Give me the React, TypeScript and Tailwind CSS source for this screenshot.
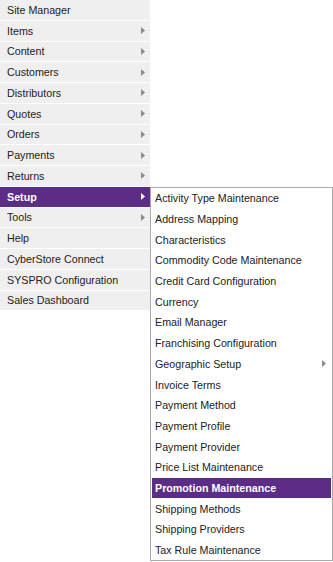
import React from 'react'

const mainItems = [
  { label: 'Site Manager', sub: false },
  { label: 'Items', sub: true },
  { label: 'Content', sub: true },
  { label: 'Customers', sub: true },
  { label: 'Distributors', sub: true },
  { label: 'Quotes', sub: true },
  { label: 'Orders', sub: true },
  { label: 'Payments', sub: true },
  { label: 'Returns', sub: true },
  { label: 'Setup', sub: true, active: true },
  { label: 'Tools', sub: true },
  { label: 'Help', sub: false },
  { label: 'CyberStore Connect', sub: false },
  { label: 'SYSPRO Configuration', sub: false },
  { label: 'Sales Dashboard', sub: false },
]

const setupItems = [
  { label: 'Activity Type Maintenance' },
  { label: 'Address Mapping' },
  { label: 'Characteristics' },
  { label: 'Commodity Code Maintenance' },
  { label: 'Credit Card Configuration' },
  { label: 'Currency' },
  { label: 'Email Manager' },
  { label: 'Franchising Configuration' },
  { label: 'Geographic Setup', sub: true },
  { label: 'Invoice Terms' },
  { label: 'Payment Method' },
  { label: 'Payment Profile' },
  { label: 'Payment Provider' },
  { label: 'Price List Maintenance' },
  { label: 'Promotion Maintenance', active: true },
  { label: 'Shipping Methods' },
  { label: 'Shipping Providers' },
  { label: 'Tax Rule Maintenance' },
]

const Arrow = ({ white }: { white?: boolean }) => (
  <svg width="4" height="7" viewBox="0 0 4 7" className="shrink-0">
    <path d="M0 0 L4 3.5 L0 7 Z" fill={white ? '#ffffff' : '#8a8a8a'} />
  </svg>
)

const App = () => {
  return (
    <div
      className="relative w-[333px] h-[562px] bg-white text-[10.7px] text-[#222]"
      style={{ fontFamily: '"Liberation Sans", Arial, sans-serif' }}
    >
      <ul className="w-[150px]">
        {mainItems.map(item => (
          <li
            key={item.label}
            className={`flex items-center justify-between h-[20.75px] pl-[7px] pr-[5px] border-b border-white ${
              item.active ? 'bg-[#5c2d87] text-white font-bold' : 'bg-[#efefef]'
            }`}
          >
            <span>{item.label}</span>
            {item.sub && <Arrow white={item.active} />}
          </li>
        ))}
      </ul>

      <ul className="absolute left-[150px] top-[187px] w-[183px] bg-white border border-[#a9a9a9] px-px py-0">
        {setupItems.map(item => (
          <li
            key={item.label}
            className={`flex items-center justify-between h-[20.7px] pl-[3px] pr-[5px] ${
              item.active ? 'bg-[#5c2d87] text-white font-bold' : ''
            }`}
          >
            <span>{item.label}</span>
            {item.sub && <Arrow />}
          </li>
        ))}
      </ul>
    </div>
  )
}

export default App
